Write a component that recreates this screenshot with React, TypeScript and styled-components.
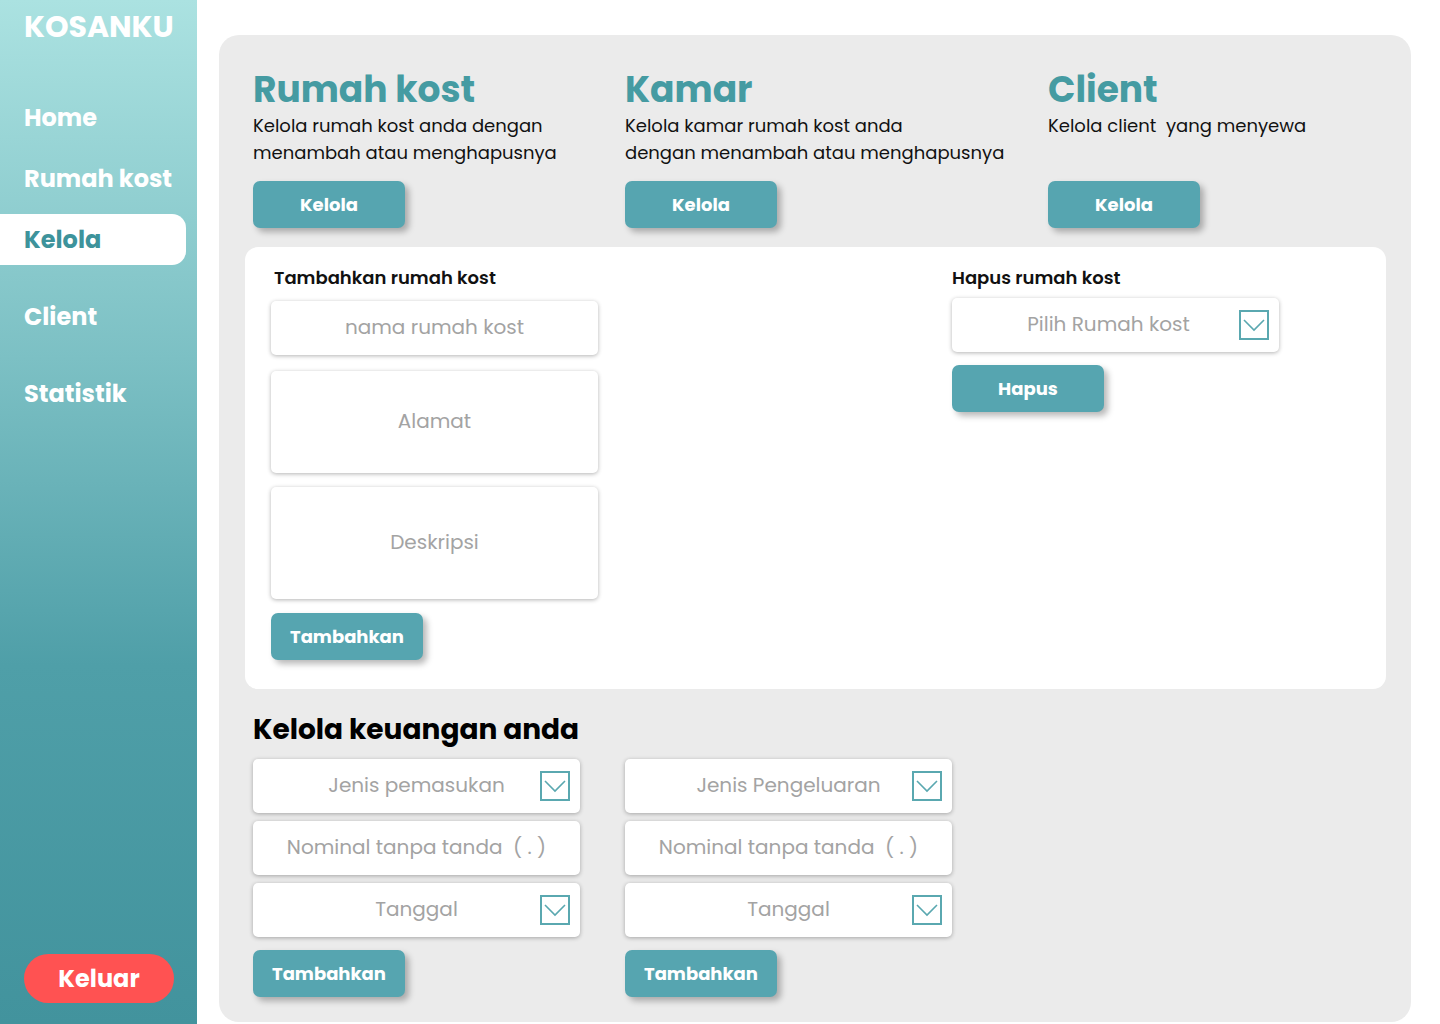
import styled, { createGlobalStyle } from 'styled-components';

const GlobalStyle = createGlobalStyle`
  * { box-sizing: border-box; }
  body {
    margin: 0;
    background: #ffffff;
    font-family: 'Poppins', 'Inter', 'Noto Sans', sans-serif;
  }
`;

const TEAL = '#459ba2';
const BUTTON = '#56a5b0';

const Layout = styled.div`
  display: flex;
  width: 1440px;
  height: 1024px;
  overflow: hidden;
`;

const Sidebar = styled.aside`
  width: 197px;
  flex-shrink: 0;
  height: 100%;
  display: flex;
  flex-direction: column;
  background: linear-gradient(180deg, #abe2e1 0%, #7cc0c4 35%, #4f9fa8 65%, #42939d 100%);
  padding-bottom: 21px;
`;

const Logo = styled.h1`
  margin: 0;
  padding: 7px 0 0 24px;
  font-size: 30px;
  line-height: 40px;
  font-weight: 700;
  color: #ffffff;
`;

const Nav = styled.nav`
  display: flex;
  flex-direction: column;
  margin-top: 35px;
`;

const NavItem = styled.a<{ $active?: boolean; $spaced?: boolean }>`
  display: flex;
  align-items: center;
  height: 51px;
  width: 186px;
  margin-top: ${(p) => (p.$spaced ? '26px' : '10px')};
  padding-left: 24px;
  border-radius: 0 14px 14px 0;
  font-size: 24px;
  font-weight: 700;
  color: ${(p) => (p.$active ? '#3d939b' : '#ffffff')};
  background: ${(p) => (p.$active ? '#ffffff' : 'transparent')};
  text-decoration: none;
`;

const LogoutButton = styled.button`
  margin: auto 0 0 24px;
  width: 150px;
  height: 49px;
  border: none;
  border-radius: 25px;
  background: #ff5252;
  color: #ffffff;
  font-family: inherit;
  font-size: 24px;
  font-weight: 700;
`;

const Main = styled.main`
  flex: 1;
  padding: 35px 29px 2px 22px;
`;

const Panel = styled.section`
  height: 100%;
  background: #ebebeb;
  border-radius: 20px;
  padding: 0 25px 0 26px;
  display: flex;
  flex-direction: column;
`;

const TopGrid = styled.div`
  display: grid;
  grid-template-columns: 372px 423px 1fr;
  padding: 33px 0 19px 8px;
`;

const Feature = styled.div`
  display: flex;
  flex-direction: column;
`;

const FeatureTitle = styled.h2`
  margin: 0;
  font-size: 36px;
  line-height: 44px;
  font-weight: 700;
  color: ${TEAL};
`;

const FeatureText = styled.p`
  margin: 0;
  height: 54px;
  font-size: 18px;
  line-height: 27px;
  color: #111111;
`;

const Button = styled.button`
  width: 152px;
  height: 47px;
  border: none;
  border-radius: 7px;
  background: ${BUTTON};
  color: #ffffff;
  font-family: inherit;
  font-size: 18px;
  font-weight: 700;
  box-shadow: 4px 4px 6px rgba(0, 0, 0, 0.28);
  cursor: pointer;
`;

const FeatureButton = styled(Button)`
  margin-top: 15px;
`;

const Card = styled.div`
  background: #ffffff;
  border-radius: 13px;
  height: 442px;
  padding: 19px 26px 0 26px;
  display: grid;
  grid-template-columns: 681px 1fr;
`;

const FormColumn = styled.div`
  display: flex;
  flex-direction: column;
  align-items: flex-start;
`;

const FormLabel = styled.h3<{ $flush?: boolean }>`
  margin: 0 0 ${(p) => (p.$flush ? 8 : 11)}px ${(p) => (p.$flush ? 0 : 3)}px;
  font-size: 18px;
  line-height: 24px;
  font-weight: 600;
  color: #111111;
`;

const Field = styled.div<{ $height?: number; $shift?: number }>`
  position: relative;
  width: 327px;
  height: ${(p) => p.$height ?? 54}px;
  background: #ffffff;
  border-radius: 5px;
  box-shadow: 0 1px 4px rgba(0, 0, 0, 0.3);
  display: flex;
  align-items: center;
  justify-content: center;
  padding-right: ${(p) => p.$shift ?? 0}px;
  padding-bottom: 2px;
  font-size: 20px;
  color: #a3a3a3;
  margin-bottom: ${(p) => (p.$height ? 14 : 16)}px;
`;

const ChevronBox = styled.span`
  position: absolute;
  right: 10px;
  top: 50%;
  transform: translateY(-50%);
  width: 30px;
  height: 30px;
  border: 2px solid #5aa8b0;
  display: flex;
  align-items: center;
  justify-content: center;
`;

const HapusButton = styled(Button)`
  margin-top: -3px;
`;

const FinanceTitle = styled.h2`
  margin: 24px 0 12px 8px;
  font-size: 28px;
  line-height: 34px;
  font-weight: 700;
  color: #000000;
`;

const FinanceGrid = styled.div`
  display: grid;
  grid-template-columns: 372px 372px;
  padding-left: 8px;
`;

const FinanceColumn = styled.div`
  display: flex;
  flex-direction: column;
  align-items: flex-start;

  & > ${Field} {
    margin-bottom: 8px;
  }
  & > ${Button} {
    margin-top: 5px;
  }
`;

function Chevron() {
  return (
    <ChevronBox>
      <svg width="22" height="14" viewBox="0 0 22 14" fill="none">
        <path d="M1 2 L11 12 L21 2" stroke="#5aa8b0" strokeWidth="1.6" />
      </svg>
    </ChevronBox>
  );
}

function SelectField({ label, shift }: { label: string; shift?: number }) {
  return (
    <Field $shift={shift}>
      {label}
      <Chevron />
    </Field>
  );
}

const features = [
  { title: 'Rumah kost', text: ['Kelola rumah kost anda dengan', 'menambah atau menghapusnya'] },
  { title: 'Kamar', text: ['Kelola kamar rumah kost anda', 'dengan menambah atau menghapusnya'] },
  { title: 'Client', text: ['Kelola client\u00a0 yang menyewa'] },
];

function FinanceForm({ type }: { type: string }) {
  return (
    <FinanceColumn>
      <SelectField label={type} />
      <Field>Nominal tanpa tanda&nbsp; ( . )</Field>
      <SelectField label="Tanggal" />
      <Button>Tambahkan</Button>
    </FinanceColumn>
  );
}

export default function App() {
  return (
    <>
      <GlobalStyle />
      <Layout>
        <Sidebar>
          <Logo>KOSANKU</Logo>
          <Nav>
            <NavItem>Home</NavItem>
            <NavItem>Rumah kost</NavItem>
            <NavItem $active>Kelola</NavItem>
            <NavItem $spaced>Client</NavItem>
            <NavItem $spaced>Statistik</NavItem>
          </Nav>
          <LogoutButton>Keluar</LogoutButton>
        </Sidebar>
        <Main>
          <Panel>
            <TopGrid>
              {features.map((f) => (
                <Feature key={f.title}>
                  <FeatureTitle>{f.title}</FeatureTitle>
                  <FeatureText>
                    {f.text.map((line, i) => (
                      <span key={i}>
                        {line}
                        <br />
                      </span>
                    ))}
                  </FeatureText>
                  <FeatureButton>Kelola</FeatureButton>
                </Feature>
              ))}
            </TopGrid>
            <Card>
              <FormColumn>
                <FormLabel>Tambahkan rumah kost</FormLabel>
                <Field>nama rumah kost</Field>
                <Field $height={102}>Alamat</Field>
                <Field $height={112}>Deskripsi</Field>
                <Button>Tambahkan</Button>
              </FormColumn>
              <FormColumn>
                <FormLabel $flush>Hapus rumah kost</FormLabel>
                <SelectField label="Pilih Rumah kost" shift={14} />
                <HapusButton>Hapus</HapusButton>
              </FormColumn>
            </Card>
            <FinanceTitle>Kelola keuangan anda</FinanceTitle>
            <FinanceGrid>
              <FinanceForm type="Jenis pemasukan" />
              <FinanceForm type="Jenis Pengeluaran" />
            </FinanceGrid>
          </Panel>
        </Main>
      </Layout>
    </>
  );
}
